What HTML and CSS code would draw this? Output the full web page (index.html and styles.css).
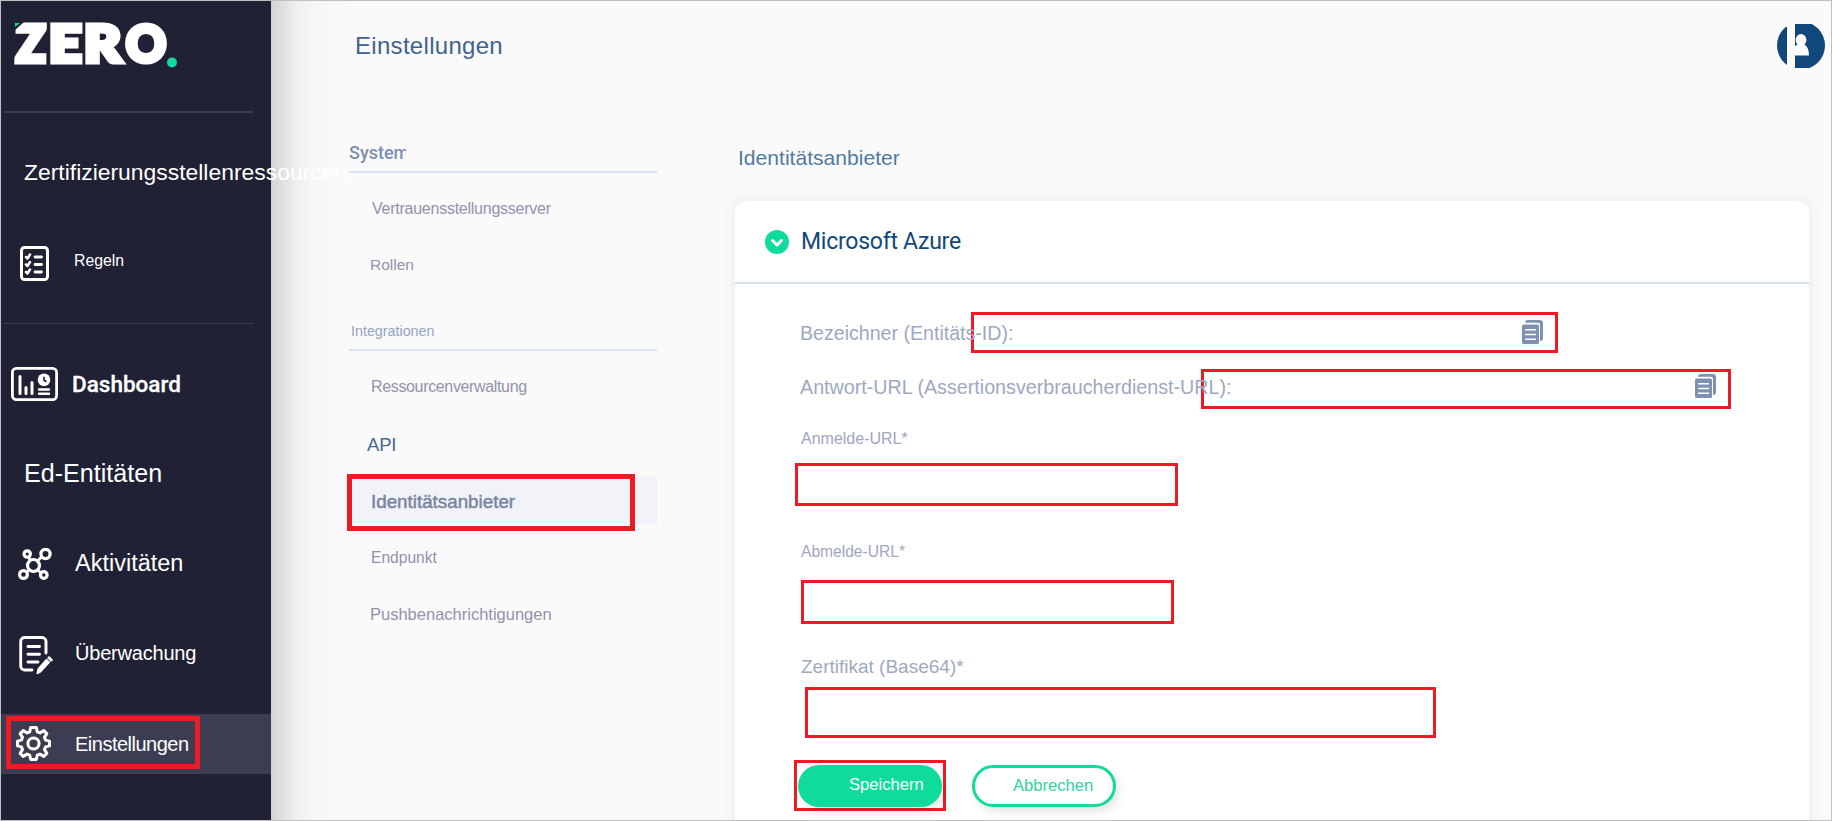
FILE: index.html
```html
<!DOCTYPE html>
<html lang="de">
<head>
<meta charset="utf-8">
<title>Einstellungen</title>
<link rel="stylesheet" href="styles.css">
</head>
<body>
<div class="app">
  <nav class="sidebar">
    <div class="logo">
      <svg width="170" height="56" viewBox="0 0 170 56">
        <g class="logo-text">
          <text x="1" y="46.300" textLength="29.500" lengthAdjust="spacingAndGlyphs">Z</text>
          <text x="34" y="46.300" textLength="32.500" lengthAdjust="spacingAndGlyphs">E</text>
          <text x="69" y="46.300" textLength="37" lengthAdjust="spacingAndGlyphs">R</text>
          <text x="111" y="46.300" textLength="40" lengthAdjust="spacingAndGlyphs">O</text>
        </g>
        <path d="M-1 6h10L-1 15z" fill="#212136"/>
        <path d="M0 7h5L0 11z" fill="#0edb9c"/>
        <circle cx="157" cy="46.500" r="5" fill="#0edb9c"/>
      </svg>
    </div>
    <div class="rule thick"></div>
    <a class="item zert"><span>Zertifizierungsstellenressourcen</span></a>
    <a class="item regeln">
      <span class="icon"><svg width="29" height="35" viewBox="0 0 29 35" fill="none" stroke="#fff" stroke-linecap="round" stroke-linejoin="round"><rect x="1.500" y="1.500" width="26" height="32" rx="3" stroke-width="3"/><path stroke-width="2.500" d="M6 11l1.500 1.500L10 8.500M6 18.500L7.500 20l2.500-4M6 26l1.500 1.500 2.500-4"/><path stroke-width="2.800" d="M15 11h6.500M15 18.500h6.500M15 26h6.500"/></svg></span>
      <span>Regeln</span>
    </a>
    <div class="rule"></div>
    <a class="item dashboard">
      <span class="icon"><svg width="47" height="34" viewBox="0 0 47 34"><rect x="1.400" y="1.400" width="44.200" height="31.200" rx="4" fill="none" stroke="#fff" stroke-width="2.800"/><path d="M9 9.500v17M15 20.500v6M21 15.500v11" stroke="#fff" stroke-width="3" stroke-linecap="round"/><path d="M28 22.500h10M28 26.800h10" stroke="#fff" stroke-width="2.400" stroke-linecap="round"/><circle cx="33" cy="12.800" r="6.300" fill="#fff"/><path d="M33 9.800v3.500l2.500 1.500" fill="none" stroke="#212136" stroke-width="1.600"/></svg></span>
      <span>Dashboard</span>
    </a>
    <a class="item ed"><span>Ed-Entitäten</span></a>
    <a class="item akt">
      <span class="icon"><svg width="34" height="33" viewBox="0 0 34 33" fill="none" stroke="#fff"><path stroke-width="2.800" d="M10.500 9l2 3.500M23.500 9l-4 4M11 22l-3 2.500M20 22l3 3"/><circle cx="15.500" cy="17.500" r="6" stroke-width="3.200"/><circle cx="9.200" cy="6" r="3.200" stroke-width="3.200"/><circle cx="27.500" cy="6" r="4.600" stroke-width="3.200"/><circle cx="5.500" cy="26.500" r="3.900" stroke-width="3.200"/><circle cx="25.800" cy="27" r="3.300" stroke-width="3.200"/></svg></span>
      <span>Aktivitäten</span>
    </a>
    <a class="item ueb">
      <span class="icon"><svg width="34" height="39" viewBox="0 0 34 39" fill="none" stroke="#fff" stroke-width="2.900" stroke-linecap="round" stroke-linejoin="round"><path d="M13 34H6a4 4 0 0 1-4.300-4V5.500A4 4 0 0 1 6 1.500h17a4 4 0 0 1 4 4V17"/><path d="M9 10.500h11.500M9 18.200h11.500M9 26h10"/><path d="M18.200 37.500l1-4.500 8.300-9.500 2.800 2.700-8.500 9.300z" fill="#fff" stroke-width="1.500"/><path d="M30 21.800l2.200 2.200" stroke-width="3"/></svg></span>
      <span>Überwachung</span>
    </a>
    <a class="item einst">
      <span class="icon"><svg width="35" height="35" viewBox="0 0 35 35" fill="none" stroke="#fff" stroke-width="3" stroke-linejoin="round"><path d="M14.700 1.500h5.600l1 4.300 2.700 1.100 3.800-2.300 3 3-2.300 3.800 1.100 2.700 3.900 1v4.800l-3.900 1-1.100 2.700 2.300 3.800-3 3-3.800-2.300-2.700 1.100-1 4.300h-5.600l-1-4.300-2.700-1.100-3.800 2.300-3-3 2.300-3.800-1.100-2.700-3.900-1v-4.800l3.900-1 1.100-2.700-2.300-3.800 3-3L11 6.900l2.700-1.100z"/><circle cx="17.500" cy="17.500" r="5.600"/></svg></span>
      <span>Einstellungen</span>
      <i class="mark"></i>
    </a>
  </nav>

  <div class="page">
    <header class="topbar">
      <h1>Einstellungen</h1>
      <svg class="avatar" width="48" height="46" viewBox="0 0 48 46"><defs><clipPath id="disc"><circle cx="24" cy="22.500" r="24"/></clipPath></defs><g clip-path="url(#disc)"><path d="M0 4h10v38H0zM18 1h30v44H18z" fill="#11487b"/></g><path d="M18 32.500V23q2-1.500 3-1.500h6q5 2 5 11z" fill="#fff"/><ellipse cx="24" cy="17" rx="5.400" ry="6" fill="#fff"/></svg>
    </header>
    <div class="columns">
      <aside class="submenu">
        <h3 class="sys"><span>System</span></h3>
        <a class="s-vert">Vertrauensstellungsserver</a>
        <a class="s-roll">Rollen</a>
        <h3 class="integ">Integrationen</h3>
        <a class="s-ress">Ressourcenverwaltung</a>
        <a class="s-api">API</a>
        <a class="s-idp">Identitätsanbieter<i class="mark"></i></a>
        <a class="s-end">Endpunkt</a>
        <a class="s-push">Pushbenachrichtigungen</a>
      </aside>
      <main class="content">
        <h2>Identitätsanbieter</h2>
        <section class="card">
          <div class="card-head">
            <svg width="24" height="24" viewBox="0 0 24 24"><circle cx="12" cy="12" r="12" fill="#0edb9c"/><path d="M7.500 10.500l4.500 4.500 4.500-4.500" fill="none" stroke="#fff" stroke-width="3" stroke-linecap="round" stroke-linejoin="round"/></svg>
            <span>Microsoft Azure</span>
          </div>
          <div class="card-body">
            <div class="inline first">
              <label>Bezeichner (Entitäts-ID):</label>
              <div class="box"><svg width="21" height="24" viewBox="0 0 21 24"><path d="M3 2.800Q3.200 0 6 0h12q3 0 3 3v15q0 2.800-3 3V5q0-2.200-2-2.200z" fill="#7f91b0"/><rect y="4.500" width="17" height="19.500" rx="1.500" fill="#7f91b0"/><path d="M3 9.700h11M3 14.500h11M3 19.200h11" stroke="#fff" stroke-width="1.500"/></svg></div>
            </div>
            <div class="inline second">
              <label>Antwort-URL (Assertionsverbraucherdienst-URL):</label>
              <div class="box"><svg width="21" height="24" viewBox="0 0 21 24"><path d="M3 2.800Q3.200 0 6 0h12q3 0 3 3v15q0 2.800-3 3V5q0-2.200-2-2.200z" fill="#7f91b0"/><rect y="4.500" width="17" height="19.500" rx="1.500" fill="#7f91b0"/><path d="M3 9.700h11M3 14.500h11M3 19.200h11" stroke="#fff" stroke-width="1.500"/></svg></div>
            </div>
            <label class="field anm">Anmelde-URL*</label>
            <div class="box b-anm"></div>
            <label class="field abm">Abmelde-URL*</label>
            <div class="box b-abm"></div>
            <label class="field cert">Zertifikat (Base64)*</label>
            <div class="box b-cert"></div>
            <div class="actions">
              <div class="box b-save"><div class="btn save">Speichern</div></div>
              <div class="btn cancel">Abbrechen</div>
            </div>
          </div>
        </section>
      </main>
    </div>
  </div>
</div>
</body>
</html>
```
FILE: styles.css
```css
* { box-sizing: border-box; }
body { margin: 0; font-family: "Liberation Sans", Arial, sans-serif; }
.app { display: flex; width: 1832px; height: 821px; border: 1px solid #c0c0c0; background: #fafafa; overflow: hidden; }
h1, h2, h3 { margin: 0; font-weight: 400; }
a, label, span { white-space: nowrap; }

.sidebar { position: relative; z-index: 1; flex: 0 0 270px; min-width: 0; background: #212136; color: #fff; }
.logo { height: 110px; padding: 15px 0 0 14px; }
.logo svg { display: block; overflow: visible; }
.logo-text { font-family: Lato, sans-serif; font-weight: 900; font-size: 50.500px; fill: #fff; stroke: #fff; stroke-width: 5.200px; }
.rule { height: 1px; width: 249px; margin-left: 3px; background: #3e3e54; }
.rule.thick { height: 2px; }
.item { display: flex; align-items: center; position: relative; }
.icon { display: flex; }
.zert { height: 118px; padding-left: 23px; font-size: 22.900px; }
.regeln { height: 64px; margin-bottom: 28px; padding-left: 19px; gap: 25px; font-size: 15.800px; }
.regeln span:last-child { padding-bottom: 5px; }
.dashboard { height: 120px; padding-left: 10px; gap: 14px; font: 500 22.500px Roboto, sans-serif; -webkit-text-stroke: .3px #fff; }
.ed { height: 58px; padding-left: 23px; font-size: 25.100px; }
.akt { height: 125px; padding-left: 17px; gap: 23px; font-size: 23.500px; }
.akt span:last-child { padding-bottom: 3px; }
.ueb { height: 56px; margin-bottom: 31px; padding-left: 18px; gap: 22px; font-size: 20px; letter-spacing: -.2px; }
.ueb span:last-child { padding-bottom: 4px; }
.einst { height: 60px; padding-left: 15px; gap: 24px; background: #3c3c53; font-size: 20px; letter-spacing: -.5px; }
.einst span { padding-top: 1px; }
.einst .icon { padding: 0 0 2px; }
.mark { position: absolute; border: 5px solid #ed1c24; }
.einst .mark { left: 5px; top: 2px; width: 194px; height: 53px; }

.page { flex: 1; min-width: 0; background: linear-gradient(90deg, #d3d3d3, #e2e2e2 13px, #f0f0f0 26px, #f7f7f7 45px, #fafafa 80px); }
.topbar { display: flex; justify-content: space-between; height: 90px; padding: 22px 6px 0 84px; }
h1 { font-size: 24px; line-height: 45px; letter-spacing: .3px; color: #3f6390; }
.columns { display: flex; }
.submenu { flex: 0 0 310px; margin-left: 76px; padding-top: 44px; color: #9292ac; }
.submenu a { display: block; position: relative; padding-left: 24px; }
.submenu h3 { margin-left: 2px; height: 38px; line-height: 36px; border-bottom: 2px solid #dae2f0; }
.sys { font: 500 18px/36px Roboto, sans-serif; color: #7b90b3; }
.sys span { display: block; width: 57px; overflow: hidden; }
.submenu .s-vert { line-height: 71px; font-size: 16px; letter-spacing: -.25px; padding-left: 25px; }
.submenu .s-roll { line-height: 41px; font-size: 15.500px; padding-left: 23px; }
.submenu .integ { margin-top: 28px; padding-left: 2px; font-size: 14.300px; color: #93a2c2; }
.s-ress { line-height: 71px; font-size: 16px; letter-spacing: -.35px; }
.submenu .s-api { line-height: 45px; font-size: 18.500px; letter-spacing: -.2px; color: #4a6891; padding-left: 20px; }
.s-idp { height: 48px; margin-top: 10px; line-height: 49px; font-size: 18.800px; color: #7986a3; background: #f2f3f8; -webkit-text-stroke: .5px #7986a3; }
.s-idp .mark { left: 0; top: -3px; width: 288px; height: 57px; }
.s-end { line-height: 65px; font-size: 15.600px; }
.submenu .s-push { line-height: 49px; font-size: 16.500px; padding-left: 23px; }

.content { flex: 0 0 1074px; margin-left: 78px; }
h2 { margin-top: 46px; height: 64px; padding-left: 3px; line-height: 42px; font-size: 21.100px; color: #527aa3; }
.card { height: 640px; border-radius: 12px 12px 0 0; background: #fff; box-shadow: 0 0 16px rgba(60, 70, 120, .09); }
.card-head { display: flex; align-items: center; gap: 12px; height: 83px; padding-left: 30px; border-bottom: 2px solid #d8e0ed; font: 23px Roboto, sans-serif; letter-spacing: -.25px; color: #11487b; }
.card-head span { padding-bottom: 1px; }
.card-body { padding: 28px 0 0 65px; color: #9da9c1; font-size: 19px; }
.box { border: 3px solid #ed1c24; }
.inline { display: flex; }
.inline label { position: relative; z-index: 1; min-width: 0; }
.inline .box { display: flex; justify-content: flex-end; padding-right: 12px; }
.first { height: 41px; font-size: 19.600px; }
.first label { flex: 0 0 171px; line-height: 42px; }
.first .box { width: 587px; padding-top: 5px; }
.second { height: 40px; margin-top: 16px; font-size: 19.700px; }
.second label { flex: 0 0 401px; line-height: 36px; }
.second .box { width: 530px; padding-top: 2px; }
.field { display: block; height: 31px; line-height: 31px; padding-left: 1px; }
.anm { margin-top: 14px; font-size: 16px; color: #a0a6c0; }
.b-anm { margin: 9px 0 0 -5px; width: 383px; height: 43px; }
.abm { margin-top: 30px; font-size: 15.600px; color: #a0a6c0; }
.b-abm { margin: 13px 0 0 1px; width: 373px; height: 44px; }
.cert { margin-top: 27px; }
.b-cert { margin: 5px 0 0 5px; width: 631px; height: 51px; }
.actions { display: flex; margin: 22px 0 0 -6px; font-size: 16.600px; }
.b-save { width: 152px; height: 51px; padding: 2px 0 0 1px; }
.btn { width: 144px; height: 42px; border-radius: 21px; background: #0edb9c; box-shadow: 3px 5px 10px rgba(0, 0, 0, .1); }
.save { padding-left: 51px; line-height: 39px; color: #fff; }
.cancel { margin: 5px 0 0 26px; padding-left: 38px; border: 3px solid #0edb9c; background: #fff; line-height: 35px; color: #2bd5a1; }
```
